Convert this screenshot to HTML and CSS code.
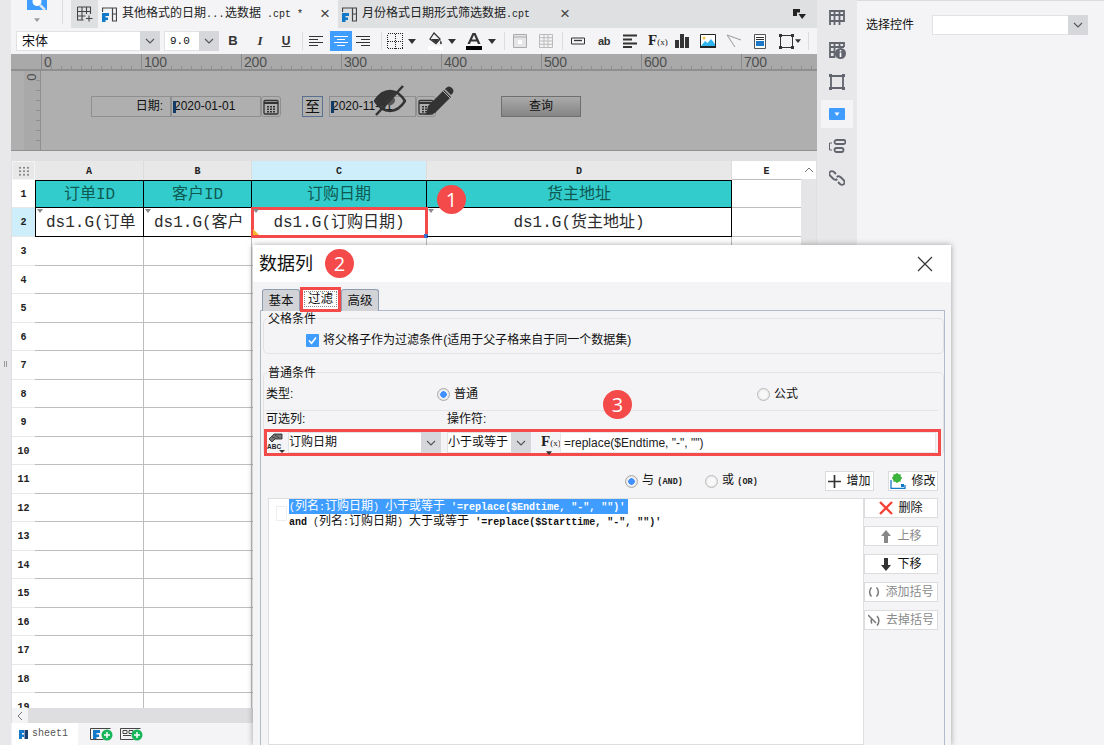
FILE: index.html
```html
<!DOCTYPE html>
<html lang="zh">
<head>
<meta charset="utf-8">
<title>数据列</title>
<link rel="stylesheet" href="styles.css">
</head>
<body>
<svg class="defs" xmlns="http://www.w3.org/2000/svg">
  <symbol id="chev" viewBox="0 0 10 6"><path d="M1 1l4 4 4-4" fill="none" stroke="#555" stroke-width="1.1"/></symbol>
  <symbol id="caret" viewBox="0 0 8 5"><path d="M0 0h8L4 5z" fill="#333"/></symbol>
  <symbol id="fr" viewBox="0 0 15 15"><path d="M5.500 1h9v13h-4V1M10.500 7h4M.5 5V1h5" fill="none" stroke="#444" stroke-width="1.200"/><path d="M0 6h7v3H3.500v1.500H6V13H3.500v2H0z" fill="#1278c8"/></symbol>
  <symbol id="cal" viewBox="0 0 16 16"><rect x="1" y="1.500" width="14" height="13.500" rx="1" fill="none" stroke="#333" stroke-width="1.300"/><path d="M1 3h14v2H1z" fill="#333"/><path d="M4 7h2v1.500H4zM7 7h2v1.500H7zM10 7h2v1.500h-2zM4 9.500h2V11H4zM7 9.500h2V11H7zM10 9.500h2V11h-2zM4 12h2v1.500H4zM7 12h2v1.500H7zM10 12h2v1.500h-2z" fill="#333"/></symbol>
</svg>

<div class="app">
  <div class="strip"><span class="grip"></span></div>

  <div class="work">
    <div class="tabbar">
      <div class="logo-box">
        <svg class="logo" width="20" height="11" viewBox="0 0 20 11"><path d="M0 0h20v10H0z" fill="#3f9dff"/><circle cx="10" cy="1.500" r="4.500" fill="#fff"/><path d="M13 5l5 5" stroke="#dfe8f2" stroke-width="2.500"/></svg>
        <svg class="logo-caret" width="6" height="4"><use href="#caret"/></svg>
      </div>
      <div class="newtab">
        <svg width="16" height="16" viewBox="0 0 16 16"><path d="M.5 1h13v7M.5 1v13h6M5 1v13M9.500 1v7M.5 5.500h13M.5 10h8M12 9.500v6M9 12.500h6.500" fill="none" stroke="#444" stroke-width="1.100"/></svg>
      </div>
      <div class="tab on">
        <svg width="15" height="15"><use href="#fr"/></svg>
        <span class="tab-t">其他格式的日期<span class="m dots">...</span>选数据<span class="m"> .cpt *</span></span>
        <span class="x">×</span>
      </div>
      <div class="tab">
        <svg width="15" height="15"><use href="#fr"/></svg>
        <span class="tab-t">月份格式日期形式筛选数据<span class="m">.cpt</span></span>
        <span class="x">×</span>
      </div>
      <div class="tab-fill">
        <svg width="13" height="10" viewBox="0 0 13 10"><path d="M0 0h7v3.500H4V7H0z" fill="#222"/><path d="M5.500 5h7.500L9.200 10z" fill="#222"/></svg>
      </div>
    </div>

    <div class="toolbar">
      <div class="sel font"><span class="sel-t">宋体</span><span class="arr"><svg width="10" height="6"><use href="#chev"/></svg></span></div>
      <div class="sel size"><span class="sel-t m12">9.0</span><span class="arr"><svg width="10" height="6"><use href="#chev"/></svg></span></div>
      <span class="b7 ico-t bold">B</span>
      <span class="b13 ico-t ital">I</span>
      <span class="b12 ico-t under">U</span>
      <i class="sep b9"></i>
      <svg class="b6" width="14" height="14" viewBox="0 0 14 14"><path d="M0 2.500h14M0 5.500h9M0 8.500h14M0 11.500h9" stroke="#333" stroke-width="1.200"/></svg>
      <span class="active b7"><svg width="14" height="14" viewBox="0 0 14 14"><path d="M0 2.500h14M3 5.500h8M0 8.500h14M3 11.500h8" stroke="#fff" stroke-width="1.200"/></svg></span>
      <svg class="b4" width="14" height="14" viewBox="0 0 14 14"><path d="M0 2.500h14M5 5.500h9M0 8.500h14M5 11.500h9" stroke="#333" stroke-width="1.200"/></svg>
      <i class="sep b11"></i>
      <svg class="b5 crisp" width="16" height="16" viewBox="0 0 16 16"><path d="M.5.500h15v15H.5zM8 .5v15M.5 8h15" fill="none" stroke="#222" stroke-dasharray="1 1"/></svg>
      <svg class="b5" width="8" height="5"><use href="#caret"/></svg>
      <svg class="b12" width="15" height="18" viewBox="0 0 15 18"><path d="M6 1l6 6-4 4.500L2 7z" fill="none" stroke="#333" stroke-width="1.300"/><path d="M3 7h8l-3 4zM12.500 8c1 2 2 3 1 4s-2 0-1-4z" fill="#333"/><path d="M0 14h15v4H0z" fill="#fff"/></svg>
      <svg class="b5" width="8" height="5"><use href="#caret"/></svg>
      <svg class="b10" width="16" height="18" viewBox="0 0 16 18"><path d="M1.500 12L6.500 1h3l5 11h-2.600l-1-2.500H5L4 12zM5.900 7.500h4.200L8 3z" fill="#333"/><path d="M0 14h16v4H0z" fill="#000"/></svg>
      <svg class="b6" width="8" height="5"><use href="#caret"/></svg>
      <i class="sep b8"></i>
      <svg class="b8" width="14" height="14" viewBox="0 0 14 14"><path d="M.5.500h13v13H.5zM.5 3h13" fill="#e6e6e8" stroke="#aaa"/><path d="M5 6h4v4H5z" fill="#fff"/></svg>
      <svg class="b12" width="14" height="14" viewBox="0 0 14 14"><path d="M.5.500h13v13H.5zM.5 3.700h13M.5 7h13M.5 10.300h13M5 .5v13M9 .5v13" fill="none" stroke="#bbb"/></svg>
      <i class="sep b9"></i>
      <svg class="b8" width="14" height="8" viewBox="0 0 14 8"><path d="M.5 1h13v6H.5z" fill="none" stroke="#333"/><path d="M3 3.500h8" stroke="#333" stroke-width="1.300"/></svg>
      <span class="b13 ico-ab">ab</span>
      <svg class="b13" width="14" height="14" viewBox="0 0 14 14"><path d="M0 1.500h14M0 5.500h9M0 9.500h14M0 13h9" stroke="#333" stroke-width="1.800"/></svg>
      <span class="b11 ico-fx">F<small>(x)</small></span>
      <svg class="b12" width="14" height="14" viewBox="0 0 14 14"><path d="M0 6h4v8H0zM5 0h4v14H5zM10 3h4v11h-4z" fill="#333"/></svg>
      <svg class="b11" width="16" height="14" viewBox="0 0 16 14"><path d="M.5.500h15v13H.5z" fill="#fff" stroke="#222"/><path d="M1 12l4-5 2.500 2L11 5l4 5v3H1z" fill="#2fb4ef"/><circle cx="4" cy="4" r="1.500" fill="#f4c344"/><path d="M0 12h16v2H0z" fill="#222"/></svg>
      <svg class="b11" width="14" height="14" viewBox="0 0 14 14"><path d="M0 1l14 5M0 1l8 12" fill="none" stroke="#999"/></svg>
      <svg class="b13" width="12" height="15" viewBox="0 0 12 15"><path d="M.5.500h11v14H.5z" fill="#fff" stroke="#555"/><path d="M2 3h8v1H2zM2 5h8v1H2z" fill="#333"/><path d="M2 7h8v5H2z" fill="#1e78c8"/></svg>
      <svg class="b13" width="15" height="15" viewBox="0 0 15 15"><path d="M1.500 1.500h12v12h-12z" fill="none" stroke="#333"/><path d="M0 0h3v3H0zM12 0h3v3h-3zM0 12h3v3H0zM12 12h3v3h-3z" fill="#333"/></svg>
      <svg class="b1" width="6" height="4"><use href="#caret"/></svg>
      <i class="sep b7"></i>
    </div>

    <div class="form">
      <div class="ruler-h">
        <span class="rh-seg">0</span><span class="rh-seg">100</span><span class="rh-seg">200</span><span class="rh-seg">300</span><span class="rh-seg">400</span><span class="rh-seg">500</span><span class="rh-seg">600</span><span class="rh-seg">700</span>
      </div>
      <div class="form-body">
        <div class="ruler-v"><span class="rv-zero">0</span></div>
        <div class="stage">
          <div class="w w-label">日期:</div>
          <div class="w w-in1"><i class="cur"></i>2020-01-01</div>
          <div class="w w-cal1"><svg width="16" height="16"><use href="#cal"/></svg></div>
          <div class="w w-to">至</div>
          <div class="w w-in2"><i class="cur"></i>2020-11-01</div>
          <div class="w w-cal2"><svg width="16" height="16"><use href="#cal"/></svg></div>
          <div class="w w-btn">查询</div>
          <svg class="ov-eye" width="32" height="32" viewBox="0 0 32 32"><path d="M1 16C6 8 12 6 16 6s10 2 15 10c-5 8-11 10-15 10S6 24 1 16z" fill="none" stroke="#333" stroke-width="2.500"/><path d="M2 16C6 9 12 6 17 6c2 0 4 .5 5 1L9 22c-3-1-5-3-7-6z" fill="#333"/><path d="M17 12l-5 5 2 3c3 1 7-1 7-5 0-1-.5-2-1-2z" fill="#555"/><path d="M29 1L2 30" stroke="#333" stroke-width="2.500"/></svg>
          <svg class="ov-pen" width="33" height="33" viewBox="0 0 33 33"><path d="M3 30l2-9L21 5l7 7-16 16z" fill="#333"/><path d="M23 3c2-2 4-2 6 0s2 4 0 6l-1 1-6-6z" fill="#333"/><path d="M20 6l7 7" stroke="#afafaf"/></svg>
        </div>
      </div>
    </div>

    <div class="sheet-wrap">
      <div class="sheet">
        <div class="row head">
          <div class="corner"></div>
          <div class="ch">A</div><div class="ch">B</div><div class="ch sel-col">C</div><div class="ch">D</div><div class="ch e">E</div>
        </div>
        <div class="row r1">
          <div class="rn">1</div>
          <div class="hd">订单<span class="m16">ID</span></div><div class="hd">客户<span class="m16">ID</span></div><div class="hd">订购日期</div><div class="hd">货主地址</div><div class="c"></div>
        </div>
        <div class="row r2">
          <div class="rn sel-row">2</div>
          <div class="dc left"><span class="m16">ds1.G(</span>订单</div>
          <div class="dc left"><span class="m16">ds1.G(</span>客户</div>
          <div class="dc picked"><span class="m16">ds1.G(</span>订购日期<span class="m16">)</span><i class="tri"></i><i class="handle"></i></div>
          <div class="dc"><span class="m16">ds1.G(</span>货主地址<span class="m16">)</span></div>
          <div class="c"></div>
        </div>
        <div class="row"><div class="rn">3</div><div class="c"></div><div class="c"></div><div class="c"></div><div class="c"></div><div class="c"></div></div>
        <div class="row"><div class="rn">4</div><div class="c"></div><div class="c"></div><div class="c"></div><div class="c"></div><div class="c"></div></div>
        <div class="row"><div class="rn">5</div><div class="c"></div><div class="c"></div><div class="c"></div><div class="c"></div><div class="c"></div></div>
        <div class="row"><div class="rn">6</div><div class="c"></div><div class="c"></div><div class="c"></div><div class="c"></div><div class="c"></div></div>
        <div class="row"><div class="rn">7</div><div class="c"></div><div class="c"></div><div class="c"></div><div class="c"></div><div class="c"></div></div>
        <div class="row"><div class="rn">8</div><div class="c"></div><div class="c"></div><div class="c"></div><div class="c"></div><div class="c"></div></div>
        <div class="row"><div class="rn">9</div><div class="c"></div><div class="c"></div><div class="c"></div><div class="c"></div><div class="c"></div></div>
        <div class="row"><div class="rn">10</div><div class="c"></div><div class="c"></div><div class="c"></div><div class="c"></div><div class="c"></div></div>
        <div class="row"><div class="rn">11</div><div class="c"></div><div class="c"></div><div class="c"></div><div class="c"></div><div class="c"></div></div>
        <div class="row"><div class="rn">12</div><div class="c"></div><div class="c"></div><div class="c"></div><div class="c"></div><div class="c"></div></div>
        <div class="row"><div class="rn">13</div><div class="c"></div><div class="c"></div><div class="c"></div><div class="c"></div><div class="c"></div></div>
        <div class="row"><div class="rn">14</div><div class="c"></div><div class="c"></div><div class="c"></div><div class="c"></div><div class="c"></div></div>
        <div class="row"><div class="rn">15</div><div class="c"></div><div class="c"></div><div class="c"></div><div class="c"></div><div class="c"></div></div>
        <div class="row"><div class="rn">16</div><div class="c"></div><div class="c"></div><div class="c"></div><div class="c"></div><div class="c"></div></div>
        <div class="row"><div class="rn">17</div><div class="c"></div><div class="c"></div><div class="c"></div><div class="c"></div><div class="c"></div></div>
        <div class="row"><div class="rn">18</div><div class="c"></div><div class="c"></div><div class="c"></div><div class="c"></div><div class="c"></div></div>
        <div class="row"><div class="rn">19</div><div class="c"></div><div class="c"></div><div class="c"></div><div class="c"></div><div class="c"></div></div>
      </div>
      <div class="vscroll"><span class="vs-up"><svg width="10" height="6" viewBox="0 0 10 6"><path d="M1 5l4-4 4 4" fill="none" stroke="#777"/></svg></span></div>
    </div>

    <div class="hscroll"><span class="hs-left"><svg width="6" height="10" viewBox="0 0 6 10"><path d="M5 1L1 5l4 4" fill="none" stroke="#777"/></svg></span></div>

    <div class="sheetbar">
      <div class="sheet-tab">
        <svg width="9" height="9" viewBox="0 0 9 9"><path d="M0 0h5v3H3v1.500h2V7H3v2H0z" fill="#1278c8"/><path d="M5.500 0H9v9H5.500z" fill="#1a3e70"/></svg>
        <span class="m sheet-name">sheet1</span>
      </div>
      <svg class="add1" width="23" height="14" viewBox="0 0 23 14"><path d="M.5 1.500h20M.5 1.500v11h13" fill="none" stroke="#444"/><path d="M3 3h7v3H6.500v1.500H9V10H6.500v2H3z" fill="#1278c8"/><circle cx="17" cy="8" r="5.500" fill="#17b65a"/><path d="M14 8h6M17 5v6" stroke="#fff" stroke-width="1.500"/></svg>
      <svg class="add2" width="23" height="14" viewBox="0 0 23 14"><path d="M.5 1.500h20M.5 1.500v11h13" fill="none" stroke="#444"/><path d="M3 3.500h4v3H3zM9 3.500h4v3H9zM3 8.500h8" fill="none" stroke="#444"/><circle cx="17" cy="8" r="5.500" fill="#17b65a"/><path d="M14 8h6M17 5v6" stroke="#fff" stroke-width="1.500"/></svg>
    </div>
  </div>

  <div class="side">
    <span class="side-i"><svg width="16" height="16" viewBox="0 0 16 16"><path d="M1 15V1h14v10H1M5.500 1v14M10.500 1v14M1 5h14" fill="none" stroke="#62646e" stroke-width="1.800"/></svg></span>
    <span class="side-i"><svg width="17" height="17" viewBox="0 0 17 17"><path d="M1 16V1h14v4M1 5h14M5.500 1v15M1 10h5M1 15h5M10.500 1v4" fill="none" stroke="#62646e" stroke-width="1.800"/><circle cx="11.500" cy="11.500" r="5.500" fill="#62646e"/><path d="M11.500 8v1.500M11.500 10.500V15" stroke="#fff" stroke-width="1.600"/></svg></span>
    <span class="side-i"><svg width="16" height="16" viewBox="0 0 16 16"><path d="M2 2h12v12H2z" fill="none" stroke="#62646e" stroke-width="1.800"/><path d="M0 0h3v3H0zM13 0h3v3h-3zM0 13h3v3H0zM13 13h3v3h-3z" fill="#62646e"/></svg></span>
    <span class="side-i on"><svg width="16" height="12" viewBox="0 0 16 12"><rect width="16" height="12" rx="1" fill="#3f9dff"/><path d="M5.500 4.500h5L8 8z" fill="#fff"/></svg></span>
    <span class="side-i"><svg width="17" height="14" viewBox="0 0 17 14"><rect x="5.500" y="1" width="11" height="4" rx="2" fill="none" stroke="#62646e" stroke-width="1.800"/><rect x="5.500" y="9" width="9" height="4" rx="2" fill="none" stroke="#62646e" stroke-width="1.800"/><path d="M3 4H.5v7H3" fill="none" stroke="#62646e"/></svg></span>
    <span class="side-i"><svg width="16" height="16" viewBox="0 0 16 16"><path d="M7 4L5 2C3.500.8 1.800 1 1 2s-1 2.800.5 4l3 3c1.300 1 2.800 1 3.700 0M9 12l2 2c1.500 1.200 3.200 1 4 0s1-2.800-.5-4l-3-3C10.200 6 8.700 6 7.800 7" fill="none" stroke="#62646e" stroke-width="1.900"/></svg></span>
  </div>

  <div class="props">
    <span class="props-l">选择控件</span>
    <div class="sel props-s"><span class="sel-t"></span><span class="arr"><svg width="10" height="6"><use href="#chev"/></svg></span></div>
  </div>
</div>

<div class="dialog">
  <div class="d-title"><span>数据列</span><svg class="d-x" width="16" height="16" viewBox="0 0 16 16"><path d="M1 1l14 14M15 1L1 15" stroke="#333" stroke-width="1.200"/></svg></div>
  <div class="d-tabs">
    <span class="d-tab">基本</span>
    <span class="d-tab cur-tab"><span class="dotted">过滤</span></span>
    <span class="d-tab">高级</span>
  </div>
  <div class="d-panel">
    <div class="grp g1">
      <div class="grp-t">父格条件</div>
      <label class="chk-row"><svg width="13" height="13" viewBox="0 0 13 13"><rect width="13" height="13" rx="1" fill="#3f9dff"/><path d="M3 6.500l2.500 2.700L10 3.500" fill="none" stroke="#fff" stroke-width="1.600"/></svg><span>将父格子作为过滤条件 <span class="gapped">(适用于父子格来自于同一个数据集)</span></span></label>
    </div>
    <div class="grp g2">
      <div class="grp-t">普通条件</div>
      <div class="type-row">
        <span class="type-l">类型:</span>
        <i class="radio sel-r"></i><span class="rt">普通</span>
        <i class="radio r-formula"></i><span class="rt">公式</span>
      </div>
      <div class="hr"></div>
      <div class="lbl-row"><span class="lbl-a">可选列:</span><span>操作符:</span></div>
      <div class="cond">
        <svg class="abc" width="18" height="21" viewBox="0 0 18 21"><path d="M2 7l5-5h8v5H8L5 10z" fill="#777" stroke="#222" stroke-width=".8"/><path d="M5 5l3 1M8 3l4 3" stroke="#222" stroke-width=".6"/><text x="0" y="17" class="abc-t">ABC</text><path d="M12 18h6l-3 3z" fill="#333"/></svg>
        <div class="sel c-col"><span class="sel-t">订购日期</span><span class="arr"><svg width="10" height="6"><use href="#chev"/></svg></span></div>
        <div class="sel c-op"><span class="sel-t">小于或等于</span><span class="arr"><svg width="10" height="6"><use href="#chev"/></svg></span></div>
        <span class="c-fx"><span class="ico-fx">F<small>(x)</small></span><svg class="fx-caret" width="6" height="4"><use href="#caret"/></svg></span>
        <div class="c-in">=replace($Endtime, "-", "")</div>
      </div>
    </div>
    <div class="and-row">
      <i class="radio sel-r"></i><span class="rt rt-a">与 <span class="m tiny">(AND)</span></span>
      <i class="radio"></i><span class="rt rt-b">或 <span class="m tiny">(OR)</span></span>
      <button class="b-add"><svg width="13" height="13" viewBox="0 0 13 13"><path d="M6.500 0v13M0 6.500h13" stroke="#333" stroke-width="1.700"/></svg>增加</button>
      <button class="b-mod"><svg width="16" height="16" viewBox="0 0 16 16"><path d="M1 7v8.500h14V12" fill="none" stroke="#1278c8" stroke-width="1.300"/><circle cx="7" cy="5" r="3" fill="none" stroke="#3cb43c" stroke-width="2.500"/><path d="M7 0v10M2 5h10M3.500 1.500l7 7M10.500 1.500l-7 7" stroke="#3cb43c" stroke-width="1.300"/><rect x="11" y="11" width="3" height="3" fill="#1278c8"/></svg>修改</button>
    </div>
    <div class="list-row">
      <div class="list">
        <i class="ghost"></i>
        <div class="ln hl"><span class="mc">(</span>列名<span class="mc">:</span>订购日期<span class="mc">) </span>小于或等于<span class="mc"> </span><span class="m">'=replace($Endtime, "-", "")'</span></div>
        <div class="ln"><span class="m">and </span><span class="mc">(</span>列名<span class="mc">:</span>订购日期<span class="mc">) </span>大于或等于<span class="mc"> </span><span class="m">'=replace($Starttime, "-", "")'</span></div>
      </div>
      <div class="acts">
        <button class="act"><svg width="14" height="14" viewBox="0 0 14 14"><path d="M1 1l12 12M13 1L1 13" stroke="#f44336" stroke-width="2.400"/></svg>删除</button>
        <button class="act off"><svg width="12" height="13" viewBox="0 0 12 13"><path d="M6 0l5 6H8v7H4V6H1z" fill="#888"/></svg>上移</button>
        <button class="act"><svg width="12" height="13" viewBox="0 0 12 13"><path d="M6 13l5-6H8V0H4v7H1z" fill="#333"/></svg>下移</button>
        <button class="act off wide"><svg width="12" height="10" viewBox="0 0 12 10"><path d="M3.500 0.500C1 3 1 7 3.500 9.500M8.500 .5C11 3 11 7 8.500 9.500" fill="none" stroke="#777" stroke-width="1.500"/></svg>添加括号</button>
        <button class="act off wide"><svg width="13" height="13" viewBox="0 0 13 13"><path d="M9 2c2.500 2.500 2.500 7 0 9.500M4 4.500C3 6 3 8 4 9.500M0 1l8 8" fill="none" stroke="#777" stroke-width="1.500"/></svg>去掉括号</button>
      </div>
    </div>
  </div>
</div>

<span class="badge b-1">1</span>
<span class="badge b-2">2</span>
<span class="badge b-3">3</span>
</body>
</html>
```

FILE: styles.css
```css
* { box-sizing: border-box; }
html, body { margin: 0; height: 100%; }
body {
  position: relative;
  width: 1104px;
  height: 745px;
  overflow: hidden;
  background: #f4f4f6;
  color: #111;
  font: 12px/16px "Liberation Sans", "Noto Sans CJK SC", sans-serif;
}
.defs { display: none; }
i { font-style: normal; display: block; }
svg { display: block; flex: none; }
.crisp { shape-rendering: crispEdges; }
button { font: inherit; color: inherit; padding: 0; }

.m { font-family: "Liberation Mono", "Noto Sans CJK SC", monospace; font-size: 10px; }
.mc { font-family: "Liberation Mono", monospace; font-size: 10px; }
.m16 { font-family: "Liberation Mono", "Noto Sans CJK SC", monospace; font-size: 16px; }
.m12 { font-family: "Liberation Mono", monospace; font-size: 11px; }
.dots { letter-spacing: .3px; }

.app { display: flex; height: 745px; }
.strip { width: 11px; flex: none; background: #e8e8ea; position: relative; }
.grip { position: absolute; left: 4px; top: 361px; width: 3px; height: 6px; border-left: 1px solid #999; border-right: 1px solid #999; }
.work { width: 806px; flex: none; display: flex; flex-direction: column; background: #e0e0e2; }

/* tab bar */
.tabbar { display: flex; height: 28px; flex: none; background: #dfe0e2; }
.logo-box { width: 60px; flex: none; background: #f4f4f6; padding-left: 16px; position: relative; }
.logo-box::after { content: ""; position: absolute; right: 8px; top: 0; height: 24px; width: 1px; background: #dcdcde; }
.logo-caret { margin: 7px 0 0 7px; opacity: .45; }
.newtab { width: 27px; flex: none; display: flex; align-items: center; justify-content: center; background: #dfe0e2; }
.tab { width: 240px; flex: none; display: flex; align-items: center; padding-left: 4px; background: #dfe0e2; position: relative; }
.tab.on { background: #f4f4f6; }
.tab-t { margin-left: 5px; white-space: nowrap; color: #222; }
.x { position: absolute; left: 222px; top: 5px; font: 17px/18px "Liberation Sans", sans-serif; color: #444; }
.tab-fill { flex: 1; display: flex; justify-content: flex-end; padding: 9px 11px 0 0; }

/* toolbar */
.toolbar { display: flex; align-items: center; height: 26px; flex: none; background: #f4f4f6; padding-left: 5px; }
.sel { display: flex; height: 20px; background: #fff; border: 1px solid #e2e2e4; flex: none; }
.sel-t { flex: 1; padding-left: 5px; line-height: 18px; white-space: nowrap; overflow: hidden; }
.arr { width: 20px; flex: none; background: #d6d7da; display: flex; align-items: center; justify-content: center; margin: -1px -1px -1px 0; }
.font { width: 144px; font-size: 13px; }
.size { width: 55px; margin-left: 4px; }
.ico-t { width: 14px; text-align: center; font: 13px/16px "Liberation Sans", sans-serif; color: #333; flex: none; }
.bold { font-weight: 700; }
.ital { font-style: italic; font-family: "Liberation Serif", serif; font-weight: 700; }
.under { text-decoration: underline; font-weight: 700; font-size: 12px; }
.sep { width: 1px; height: 18px; background: #dcdcde; flex: none; }
.active { width: 22px; height: 20px; background: #3f9dff; display: flex; align-items: center; justify-content: center; flex: none; }
.ico-ab { width: 12px; font: 700 11px/14px "Liberation Sans", sans-serif; color: #333; letter-spacing: -.3px; flex: none; }
.ico-fx { display: block; width: 15px; font: 700 15px/14px "Liberation Serif", serif; color: #222; white-space: nowrap; flex: none; }
.ico-fx small { font-size: 9px; font-weight: 400; }
.b1 { margin-left: 1px; } .b4 { margin-left: 4px; } .b5 { margin-left: 5px; } .b6 { margin-left: 6px; }
.b7 { margin-left: 7px; } .b8 { margin-left: 8px; } .b9 { margin-left: 9px; } .b10 { margin-left: 10px; }
.b11 { margin-left: 11px; } .b12 { margin-left: 12px; } .b13 { margin-left: 13px; }

/* form */
.form { height: 97px; flex: none; background: #afafaf; border-bottom: 1px solid #8f8f8f; display: flex; flex-direction: column; }
.ruler-h {
  height: 17px; flex: none; display: flex; padding-left: 30px; overflow: hidden;
  background: #a9a9a9; border-bottom: 2px solid #8f8f8f;
}
.rh-seg {
  width: 100px; flex: none; padding-left: 2px; border-left: 1px solid #8a8a8a;
  font: 14px/16px "Liberation Sans", sans-serif; color: #505050; letter-spacing: -.2px;
  background: repeating-linear-gradient(90deg, transparent 0 9px, #8f8f8f 9px 10px) left bottom / 100% 3px no-repeat;
}
.form-body { flex: 1; display: flex; }
.ruler-v {
  width: 17px; margin-left: 13px; flex: none; position: relative; background: #a9a9a9; border-right: 1px solid #8f8f8f;
  background-image: repeating-linear-gradient(180deg, transparent 0 9px, #8f8f8f 9px 10px);
  background-size: 4px 100%; background-position: right top; background-repeat: no-repeat;
}
.rv-zero { position: absolute; left: 0; top: -1px; width: 14px; transform: rotate(90deg); font: 13px/14px "Liberation Sans", sans-serif; color: #505050; text-align: center; }
.stage { flex: 1; position: relative; }
.w { position: absolute; top: 25px; height: 21px; border: 1px solid #8f8f8f; line-height: 19px; color: #111; }
.w-label { left: 50px; width: 80px; text-align: right; padding-right: 7px; }
.w-in1, .w-in2 { padding-left: 2px; font-size: 12px; white-space: nowrap; overflow: hidden; }
.w-in1 { left: 130px; width: 90px; }
.w-in2 { left: 288px; width: 87px; }
.cur { position: absolute; left: 1px; top: 4px; width: 3px; height: 12px; background: #123a66; }
.w-cal1, .w-cal2 { width: 20px; border-radius: 3px; display: flex; align-items: center; justify-content: center; }
.w-cal1 { left: 220px; }
.w-cal2 { left: 375px; }
.w-to { left: 261px; width: 21px; border-color: #5a7090; text-align: center; font-size: 15px; }
.w-btn { left: 460px; width: 80px; text-align: center; border-color: #6f6f6f; background: linear-gradient(#aaa, #858585); }
.ov-eye { position: absolute; left: 333px; top: 14px; }
.ov-pen { position: absolute; left: 382px; top: 14px; }

/* sheet */
.sheet-wrap { flex: 1; min-height: 0; margin-top: 10px; display: flex; padding-left: 1px; overflow: hidden; }
.sheet { width: 789px; flex: none; background: #fff; }
.row { display: grid; grid-template-columns: 23px 109px 108px 175px 305px 69px; grid-template-rows: minmax(0, 1fr); height: 28.5px; }
.head { height: 19px; background: #e8e8e8; }
.r1 { height: 28px; }
.r2 { height: 29px; }
.corner { background: #e8e8e8; border: 1px solid #f4f4f4; position: relative; }
.corner::after { content: ""; position: absolute; left: 5px; top: 4px; width: 11px; height: 10px; background: radial-gradient(circle, #8a8a8a 1px, transparent 1.200px) 0 0 / 4px 3.500px; }
.ch { font: 700 10px/18px "Liberation Mono", monospace; padding-top: 2px; overflow: hidden; text-align: center; color: #222; border-right: 1px solid #dcdcdc; background: #e8e8e8; }
.ch.sel-col { background: #cdeefa; }
.ch.e { background: #fff; border-bottom: 1px solid #bdbdbd; border-right: 0; }
.rn { font: 700 10px/26px "Liberation Mono", monospace; padding-top: 2px; overflow: hidden; text-align: center; color: #222; background: #fff; border-bottom: 1px solid #e8e8e8; }
.rn.sel-row { background: #cdeefa; }
.c { border-right: 1px solid #bdbdbd; border-bottom: 1px solid #bdbdbd; }
.row .c:last-child { border-right: 0; }
.hd { background: #33cccc; border: 1px solid #000; border-left-width: 0; font-size: 16px; line-height: 26px; text-align: center; color: #0e5a52; white-space: nowrap; overflow: hidden; }
.r1 .hd:nth-child(2) { border-left-width: 1px; }
.dc { position: relative; border-right: 1px solid #000; border-bottom: 1px solid #000; font-size: 16px; line-height: 28px; text-align: center; color: #2c2c2c; white-space: nowrap; }
.dc::before { content: ""; position: absolute; left: 1px; top: 1px; border: 3px solid transparent; border-top: 4px solid #888; }
.r2 .dc:nth-child(2) { border-left: 1px solid #000; }
.left { text-align: left; padding-left: 10px; overflow: hidden; }
.picked { outline: 3px solid #f44a4a; outline-offset: -2px; }
.tri { position: absolute; left: 1px; bottom: 1px; border-left: 6px solid #f4b82e; border-top: 6px solid transparent; }
.handle { position: absolute; right: -2px; bottom: -2px; width: 4px; height: 4px; background: #3a70d0; }
.vscroll { width: 15px; flex: none; background: #e5e5e7; }
.vs-up { display: flex; height: 18px; background: #fff; align-items: center; justify-content: center; }
.hscroll { height: 15px; flex: none; background: #dedee0; margin-left: 1px; }
.hs-left { display: flex; width: 16px; height: 15px; background: #f4f4f6; align-items: center; justify-content: center; }
.sheetbar { height: 22px; flex: none; display: flex; align-items: center; background: #f4f4f6; padding-left: 1px; }
.sheet-tab { width: 66px; height: 22px; flex: none; background: #fff; display: flex; align-items: center; padding-left: 7px; }
.sheet-name { margin-left: 4px; color: #555; }
.add1 { margin-left: 12px; }
.add2 { margin-left: 7px; }

/* side icons */
.side { width: 40px; flex: none; background: #e8e8ea; display: flex; flex-direction: column; align-items: center; gap: 4px; padding-top: 4px; }
.side-i { width: 32px; height: 28px; display: flex; align-items: center; justify-content: center; }
.side-i.on { background: #f4f4f6; }

/* property panel */
.props { flex: 1; display: flex; align-items: flex-start; padding: 14px 16px 0 9px; border-top: 1px solid #dcdcde; }
.props-l { width: 66px; line-height: 20px; flex: none; }
.props-s { width: 156px; }

/* dialog */
.dialog {
  position: absolute; left: 253px; top: 245px; width: 698px; height: 500px;
  background: #f4f4f6; box-shadow: 0 0 6px rgba(0, 0, 0, .35); display: flex; flex-direction: column;
}
.d-title { height: 37px; flex: none; background: #fff; display: flex; align-items: center; justify-content: space-between; padding: 0 18px 0 6px; font-size: 18px; }
.d-tabs { display: flex; align-items: flex-end; height: 25px; margin-top: 4px; padding-left: 9px; flex: none; position: relative; z-index: 1; }
.d-tab { width: 38px; height: 22px; background: #d2d3d6; border: 1px solid #8f9db2; border-bottom: 0; border-radius: 3px 3px 0 0; text-align: center; line-height: 22px; font-size: 12.500px; }
.cur-tab { width: 41px; height: 25px; background: #fff; border: 3px solid #f44a4a; border-radius: 0; line-height: 16px; padding-top: 1px; margin: 0 0 -1px; }
.dotted { outline: 1px dotted #888; padding: 0 3px; }
.d-panel { margin: -1px 0 0 7px; width: 685px; flex: 1; min-height: 0; border: 1px solid #b0bccc; border-bottom: 0; display: flex; flex-direction: column; }
.grp { margin-left: 2px; width: 681px; border: 1px solid #e3e3e6; border-radius: 5px; flex: none; }
.grp-t { margin: -8px 0 0 3px; width: fit-content; padding: 0 1px; background: #f4f4f6; height: 16px; }
.g1 { margin-top: 7px; height: 36px; }
.g2 { margin-top: 18px; height: 83px; border-bottom-color: transparent; }
.chk-row { display: flex; align-items: center; gap: 4px; margin: 5px 0 0 42px; height: 16px; }
.gapped { margin-left: -3px; }
.type-row { display: flex; align-items: center; height: 18px; margin-top: 4px; padding-left: 2px; }
.type-l { width: 171px; }
.radio { width: 13px; height: 13px; flex: none; border-radius: 50%; border: 1px solid #bbb; background: #f8f8f8; box-shadow: inset 0 0 2px #ccc; }
.sel-r { background: radial-gradient(circle, #3f8fff 0 3px, #f4f4f6 3.500px); border-color: #aaa; }
.rt { margin-left: 4px; white-space: nowrap; }
.r-formula { margin-left: 279px; }
.hr { height: 1px; margin: 7px 5px 0 1px; background: #e4e4e6; }
.lbl-row { display: flex; height: 16px; padding-left: 2px; line-height: 17px; }
.lbl-a { width: 181px; }
.cond { display: flex; align-items: center; height: 27px; width: 677px; margin-top: 2px; border: 3px solid #f44a4a; }
.abc-t { font: 700 6.500px "Liberation Sans", sans-serif; fill: #222; }
.c-col { width: 153px; height: 21px; margin-left: 3px; }
.c-col .sel-t, .c-op .sel-t { padding-left: 0; line-height: 19px; }
.c-op { width: 84px; height: 21px; margin-left: 6px; }
.c-fx { margin-left: 8px; width: 19px; height: 21px; display: flex; flex-direction: column; align-items: center; padding-top: 2px; flex: none; }
.fx-caret { margin-top: 1px; }
.c-in { margin-left: 2px; width: 376px; height: 21px; background: #fff; border: 1px solid #e8e8ea; line-height: 20px; padding-left: 3px; font-size: 12px; color: #222; }

.and-row { display: flex; align-items: center; height: 20px; margin-top: 16px; padding-left: 364px; flex: none; }
.tiny { font-size: 8.500px; font-weight: 700; color: #222; }
.rt-a { width: 63px; }
.rt-b { width: 103px; }
.and-row button { height: 20px; background: #fff; border: 1px solid #dcdcde; display: flex; align-items: center; justify-content: center; gap: 5px; flex: none; }
.b-add { width: 49px; }
.b-mod { width: 50px; margin-left: 14px; }
.list-row { display: flex; flex: 1; min-height: 0; margin: 7px 0 0 7px; }
.list { position: relative; width: 596px; flex: none; background: #fff; border: 1px solid #dedee0; padding: 0 0 0 20px; }
.ghost { position: absolute; left: 7px; top: 7px; width: 11px; height: 15px; border: 1px solid #eee; }
.ln { position: relative; height: 15px; line-height: 15px; white-space: nowrap; width: fit-content; color: #111; }
.ln .m { font-weight: 700; }
.hl { background: #3f9dff; color: #fff; width: 339px; }
.acts { width: 74px; flex: none; display: flex; flex-direction: column; gap: 8px; }
.act { height: 20px; background: #fff; border: 1px solid #dcdcde; display: flex; align-items: center; justify-content: center; gap: 5px; }
.off { color: #8a8a8a; }

.d-x { flex: none; }

.badge {
  position: absolute; width: 29px; height: 29px; border-radius: 50%; background: #f44a4a; color: #fff;
  font: 20px/29px "Open Sans", "Liberation Sans", sans-serif; text-align: center;
}
.b-1 { left: 437px; top: 185px; }
.b-2 { left: 325px; top: 249px; }
.b-3 { left: 603px; top: 390px; }
```
